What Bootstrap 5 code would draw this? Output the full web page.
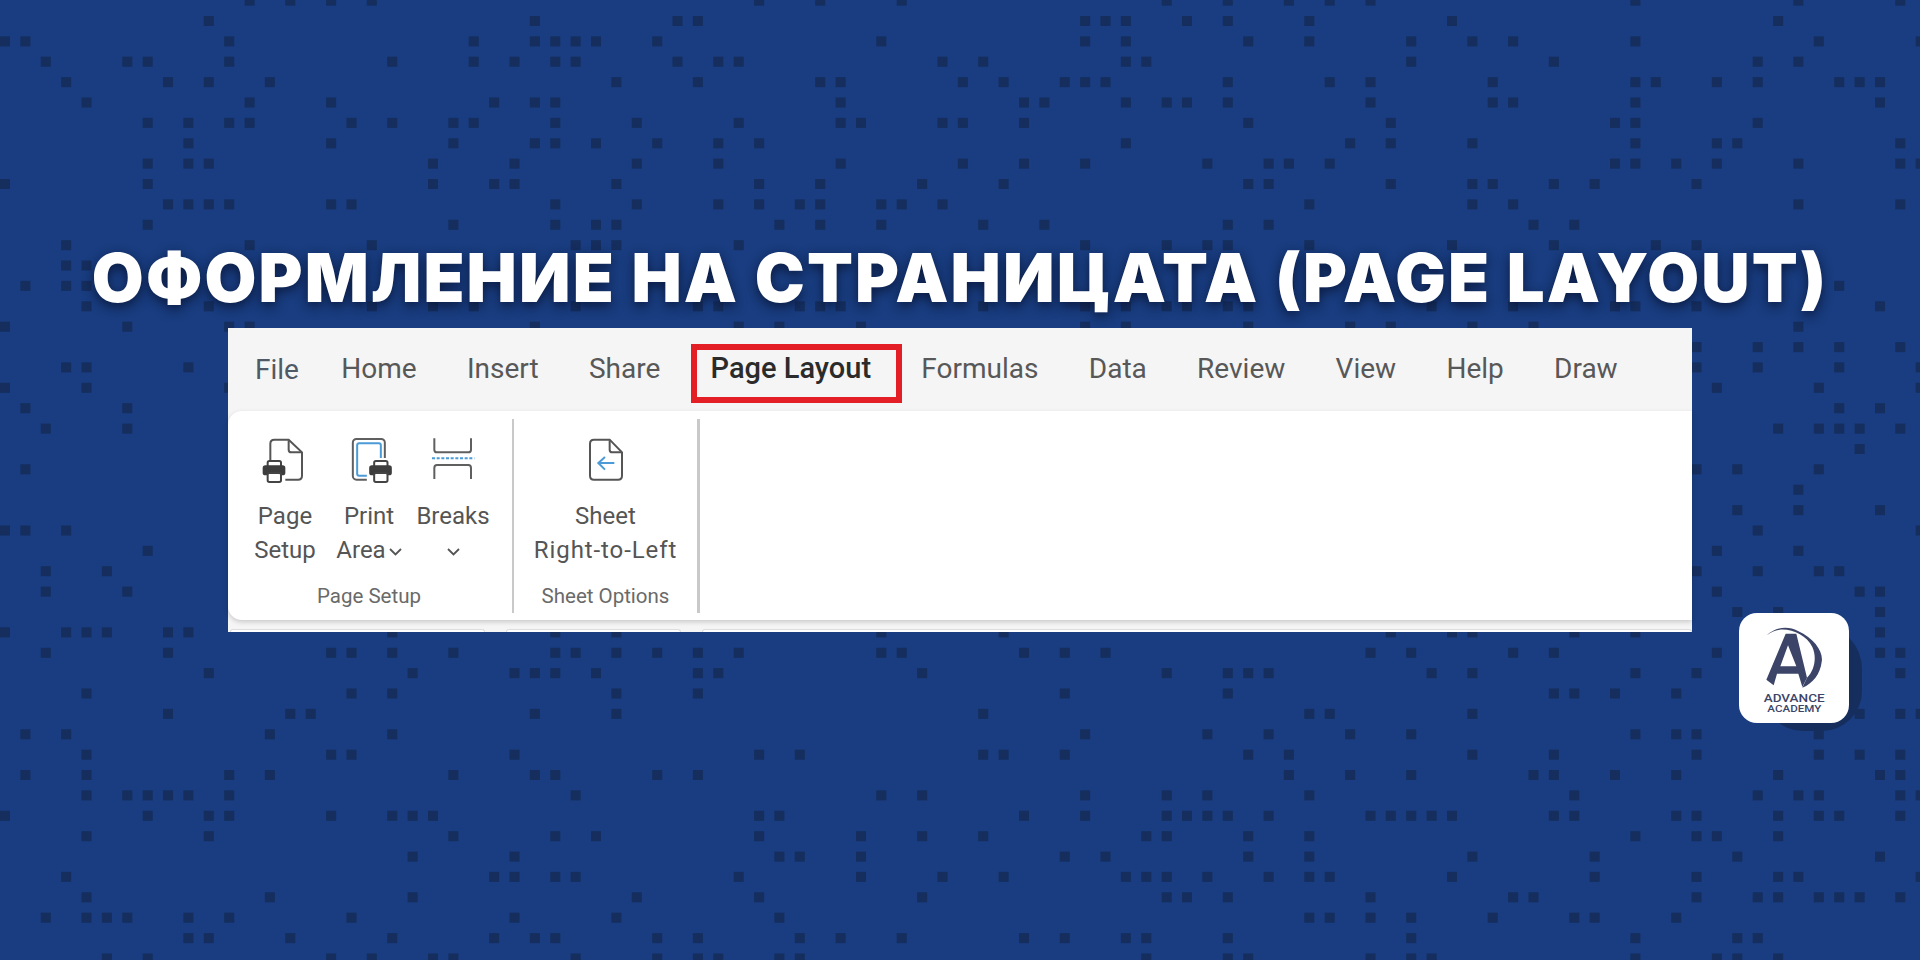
<!DOCTYPE html>
<html lang="bg">
<head>
  <meta charset="UTF-8" />
  <meta name="viewport" content="width=device-width, initial-scale=1" />
  <title>Оформление на страницата (Page Layout)</title>
  <link href="https://cdn.jsdelivr.net/npm/bootstrap@5.3.2/dist/css/bootstrap.min.css" rel="stylesheet" />
  <style>
    html, body { height: 100%; }
    body { background: #193d80; overflow: hidden; font-family: Roboto, "Liberation Sans", sans-serif; }
    #dots { position: absolute; inset: 0; z-index: 0; }
    #dots rect { fill: #152e5e; }
    .page { position: relative; z-index: 1; width: 1920px; height: 960px; padding-top: 240px; }
    .title { font-family: Inter, "Open Sans", sans-serif; font-weight: 900; font-size: 67px; line-height: 76px; height: 88px; margin: 0; color: #fff; letter-spacing: 2.150px; text-shadow: 0 4px 12px rgba(8, 20, 50, .85); white-space: nowrap; }
    .workarea { padding-left: 228px; }

    .ribbon { width: 1464px; height: 304px; background: #f5f5f5; }
    .tabs { height: 83px; padding: 0 0 2px 27px; gap: 50.300px; font-size: 28px; color: #585858; }
    .tab-file { padding-top: 3px; margin-right: -8px; color: #505a66; }
    .tab-active { position: relative; font-size: 29px; font-weight: 500; color: #2b2b2b; }
    .tab-active::after { content: ""; position: absolute; left: -20px; right: -31px; top: -3px; bottom: -13px; border: 6px solid #e31e24; }

    .panel { height: 209px; padding: 8px 0 7px 15px; background: #fff; border-radius: 14px 0 0 14px; box-shadow: 0 2px 5px rgba(0, 0, 0, .18); }
    .group { display: flex; flex-direction: column; }
    .tools { display: flex; padding-top: 19px; }
    .tool { display: flex; flex-direction: column; align-items: center; width: 84px; font-size: 24px; line-height: 34px; color: #555; text-align: center; }
    .tool svg.ico { display: block; height: 45px; margin-bottom: 16px; }
    .ico-page { margin-left: -6px; }
    .ico-print { margin-left: 6px; }
    .tool-wide { width: 183px; }
    .text-wide { letter-spacing: .900px; white-space: nowrap; }
    .group-label { margin-top: 15px; font-size: 20.500px; line-height: 28px; color: #6a6a6a; text-align: center; }
    .sep { width: 2px; margin-left: 17px; background: #c9c9c9; }
    .sep-2 { width: 3px; margin-left: 0; }
    .chev { width: 13px; height: 8px; vertical-align: 2px; margin-left: 3px; }
    .chev-only { margin: 0; }

    .under { height: 12px; padding: 9px 0 0 2px; gap: 21px; }
    .under div { height: 3px; background: #fff; border: 1px solid #dedede; border-bottom: 0; border-radius: 4px 4px 0 0; }

    .logo { position: relative; flex: none; width: 110px; height: 110px; margin: 285px 0 0 47px; background: #fff; border-radius: 18px; }
    .logo::before { content: ""; position: absolute; z-index: -1; left: 24px; right: -13px; top: 12px; bottom: -8px; background: #152e5e; border-radius: 40px 44px 40px 40px; }
    .logo svg { display: block; }
    .logo text { font-family: Roboto, sans-serif; font-weight: 500; fill: #3c4568; }
  </style>
</head>
<body>
  <svg id="dots" width="1920" height="960" viewBox="0 0 1920 960" aria-hidden="true"></svg>

  <div class="page">
    <h1 class="title text-center">ОФОРМЛЕНИЕ НА СТРАНИЦАТА (PAGE LAYOUT)</h1>

    <div class="workarea d-flex align-items-start">
      <div class="ribbon">
        <div class="tabs d-flex align-items-center">
          <span class="tab-file">File</span>
          <span>Home</span>
          <span>Insert</span>
          <span>Share</span>
          <span class="tab-active">Page Layout</span>
          <span>Formulas</span>
          <span>Data</span>
          <span>Review</span>
          <span>View</span>
          <span>Help</span>
          <span>Draw</span>
        </div>

        <div class="panel d-flex">
          <div class="group">
            <div class="tools">
              <div class="tool">
                <svg class="ico ico-page" viewBox="125 355 123 135" width="41" fill="none">
                  <path d="M150 425V372q0-12 12-12h43l40 38v70q0 12-12 12h-38" stroke="#555" stroke-width="6" />
                  <path d="M205 362v28q0 8 8 8h30" stroke="#555" stroke-width="6" />
                  <rect x="142" y="424" width="40" height="22" rx="5" fill="#fff" stroke="#444" stroke-width="6" />
                  <rect x="127" y="437" width="68" height="30" rx="8" fill="#3d3d3d" />
                  <rect x="142" y="460" width="40" height="27" rx="5" fill="#fff" stroke="#444" stroke-width="6" />
                </svg>
                <span>Page</span><span>Setup</span>
              </div>
              <div class="tool">
                <svg class="ico ico-print" viewBox="395 355 125 135" width="42" fill="none">
                  <rect x="400" y="358" width="96" height="122" rx="11" stroke="#5f5f5f" stroke-width="6" />
                  <rect x="413" y="371" width="71" height="97" rx="6" stroke="#4a9bd8" stroke-width="6" />
                  <rect x="442" y="415" width="78" height="75" fill="#fff" />
                  <rect x="464" y="424" width="40" height="22" rx="5" fill="#fff" stroke="#444" stroke-width="6" />
                  <rect x="449" y="437" width="68" height="30" rx="8" fill="#3d3d3d" />
                  <rect x="464" y="460" width="40" height="27" rx="5" fill="#fff" stroke="#444" stroke-width="6" />
                </svg>
                <span>Print</span>
                <span>Area<svg class="chev" viewBox="0 0 13 8" fill="none"><path d="M1 1l5.500 5.500L12 1" stroke="#555" stroke-width="1.800" /></svg></span>
              </div>
              <div class="tool">
                <svg class="ico" viewBox="635 355 132 135" width="44" fill="none">
                  <path d="M645 356v34q0 8 8 8h94q8 0 8-8v-34" stroke="#5f5f5f" stroke-width="6" />
                  <path d="M638 416h127" stroke="#4a9bd8" stroke-width="6" stroke-dasharray="9 5" />
                  <path d="M645 478v-33q0-9 8-9h94q8 0 8 9v33" stroke="#5f5f5f" stroke-width="6" />
                </svg>
                <span>Breaks</span>
                <span><svg class="chev chev-only" viewBox="0 0 13 8" fill="none"><path d="M1 1l5.500 5.500L12 1" stroke="#555" stroke-width="1.800" /></svg></span>
              </div>
            </div>
            <div class="group-label">Page Setup</div>
          </div>

          <div class="sep"></div>

          <div class="group">
            <div class="tools">
              <div class="tool tool-wide">
                <svg class="ico" viewBox="1105 355 108 135" width="36" fill="none">
                  <path d="M1111 372q0-12 12-12h47l37 38v70q0 12-12 12h-72q-12 0-12-12z" stroke="#555" stroke-width="6" />
                  <path d="M1170 362v28q0 8 8 8h27" stroke="#555" stroke-width="6" />
                  <path d="M1184 430h-48M1156 412l-20 18 20 20" stroke="#4a9bd8" stroke-width="6" />
                </svg>
                <span>Sheet</span><span class="text-wide">Right-to-Left</span>
              </div>
            </div>
            <div class="group-label">Sheet Options</div>
          </div>

          <div class="sep sep-2"></div>
        </div>

        <div class="under d-flex">
          <div style="width: 255px"></div>
          <div style="width: 175px"></div>
          <div class="flex-grow-1"></div>
        </div>
      </div>

      <div class="logo">
        <svg viewBox="118 68 330 330" width="110" height="110">
          <path fill="#3c4568" fill-rule="evenodd" d="M258 130H290L322 262 308 290 296 250H232L222 285 200 268ZM265 165 242 228H290Z" />
          <path fill="#3c4568" d="M200 136C225 112 262 104 295 122 345 145 372 185 366 215 362 250 340 280 308 292L322 262C345 240 352 200 338 170 320 135 280 115 240 118 225 120 212 126 200 136Z" />
          <text x="192" y="334" font-size="31" textLength="183" lengthAdjust="spacingAndGlyphs">ADVANCE</text>
          <text x="203" y="365" font-size="28" textLength="162" lengthAdjust="spacingAndGlyphs">ACADEMY</text>
        </svg>
      </div>
    </div>
  </div>

  <script src="https://cdn.jsdelivr.net/npm/bootstrap@5.3.2/dist/js/bootstrap.bundle.min.js"></script>
  <script>
    // background squares, one list of columns per row
    const rows = [
      [12,14,16,18,37,40,44,57,60,63,65,67,80,88,93],
      [10,26,33,34,53,54,55,58,60,64,71,87],
      [0,1,11,23,26,27,28,29,32,43,53,55,61,64,69,72,74,80,89,94],
      [2,6,7,11,19,23,25,27,28,33,35,36,46,48,55,56,69,76,86,88],
      [3,8,10,13,30,34,40,41,47,49,52,53,54,60,65,67,73,80,81,84,86,90,91,92],
      [4,12,16,24,26,27,41,50,51,55,57,58,60,67,73,74,80,92],
      [7,9,11,12,17,19,22,23,27,31,36,41,42,46,47,50,61,68,79,80,86],
      [9,16,22,26,27,29,32,35,37,55,66,68,72,80,84,85,93],
      [7,9,10,21,25,31,35,41,47,50,53,59,62,63,65,79,80,82,84,88,93,94],
      [0,7,21,24,25,30,37,40,45,49,61,62,68,72,73,76,78,83],
      [8,9,10,11,16,17,27,31,35,37,39,40,43,44,46,64,72,74,88,93],
      [7,22,27,29,30,38,40,43,48,51,60,62,75,77],
      [3,12,18,28,29,30,36,53,57,59,60,64,71,76,81,83],
      [3,4,85],
      [1,3,4,63,90],
      [4,10,18,21,23,28,34,35,39,40,41,48,53,55,57,58,60,61,70,74,79,80,83,92],
      [0,6,11,12,26,36,38,42,53,55,61,66,68,72,75,88],
      [83,86,88,90,93],
      [3,4,9,83,86,90,94],
      [0,4,11,84,89,94],
      [1,6,90,92],
      [2,6,87,89,90,91,93],
      [91],
      [1,83,85,89],
      [88],
      [85,88,92],
      [0,1,3,86,94],
      [7,84,88],
      [2,5,83,86,89,90],
      [2,6,84,91,92],
      [85,87,92],
      [0,3,4,5,8,9,19,27,30,43,49,68,71,72,77,80,92],
      [2,8,16,17,19,22,27,28,30,32,34,36,43,44,50,52,54,67,69,74,76,84,92,93],
      [10,20,25,26,27,29,34,35,45,57,60,61,62,70,72,80,83,93],
      [4,17,19,30,34,52,60,76,77,79,82],
      [8,14,15,26,30,48,64,65,72,91,93,94],
      [1,3,13,19,53,59,62,66,69,80,82,83,89],
      [4,16,17,25,37,39,48,49,52,61,63,72,76,83,89,91,93],
      [1,4,11,13,22,26,27,32,34,63,66,69,75,76,79,82,87,92,93],
      [4,6,7,8,9,11,28,43,45,53,57,59,64,77,86,88,89,93,94],
      [0,7,10,11,16,19,20,21,37,38,50,53,57,58,59,60,62,67,68,69,70,71,76,77,82,83,87,89,90,93],
      [4,10,22,27,29,37,42,45,48,56,57,61,64,80,83,84,87],
      [20,25,38,39,42,52,54,61,64,72,78,85,92],
      [3,24,25,27,28,36,42,46,49,55,56,57,59,62,64,65,71,78,83,87,88,94],
      [4,13,20,31,37,45,57,58,60,67,74,75,83,86,87,89,90,91,93],
      [2,4,5,6,9,11,17,25,30,38,64,65,67,69,73,77,78,82],
      [9,10,14,19,24,26,27,32,34,39,41,44,50,52,55,56,60,69,80,85,86],
      [5,7,16,18,21,22,28,32,34,35,38,39,56,60,61,67,69,70,80,84,85,87]
    ];
    const pitch = 20.38;
    let marks = "";
    rows.forEach((cols, r) => {
      cols.forEach(c => {
        marks += `<rect x="${(c * pitch).toFixed(1)}" y="${(r * pitch - 4.4).toFixed(1)}" width="10" height="10" />`;
      });
    });
    document.getElementById("dots").innerHTML = marks;
  </script>
</body>
</html>
